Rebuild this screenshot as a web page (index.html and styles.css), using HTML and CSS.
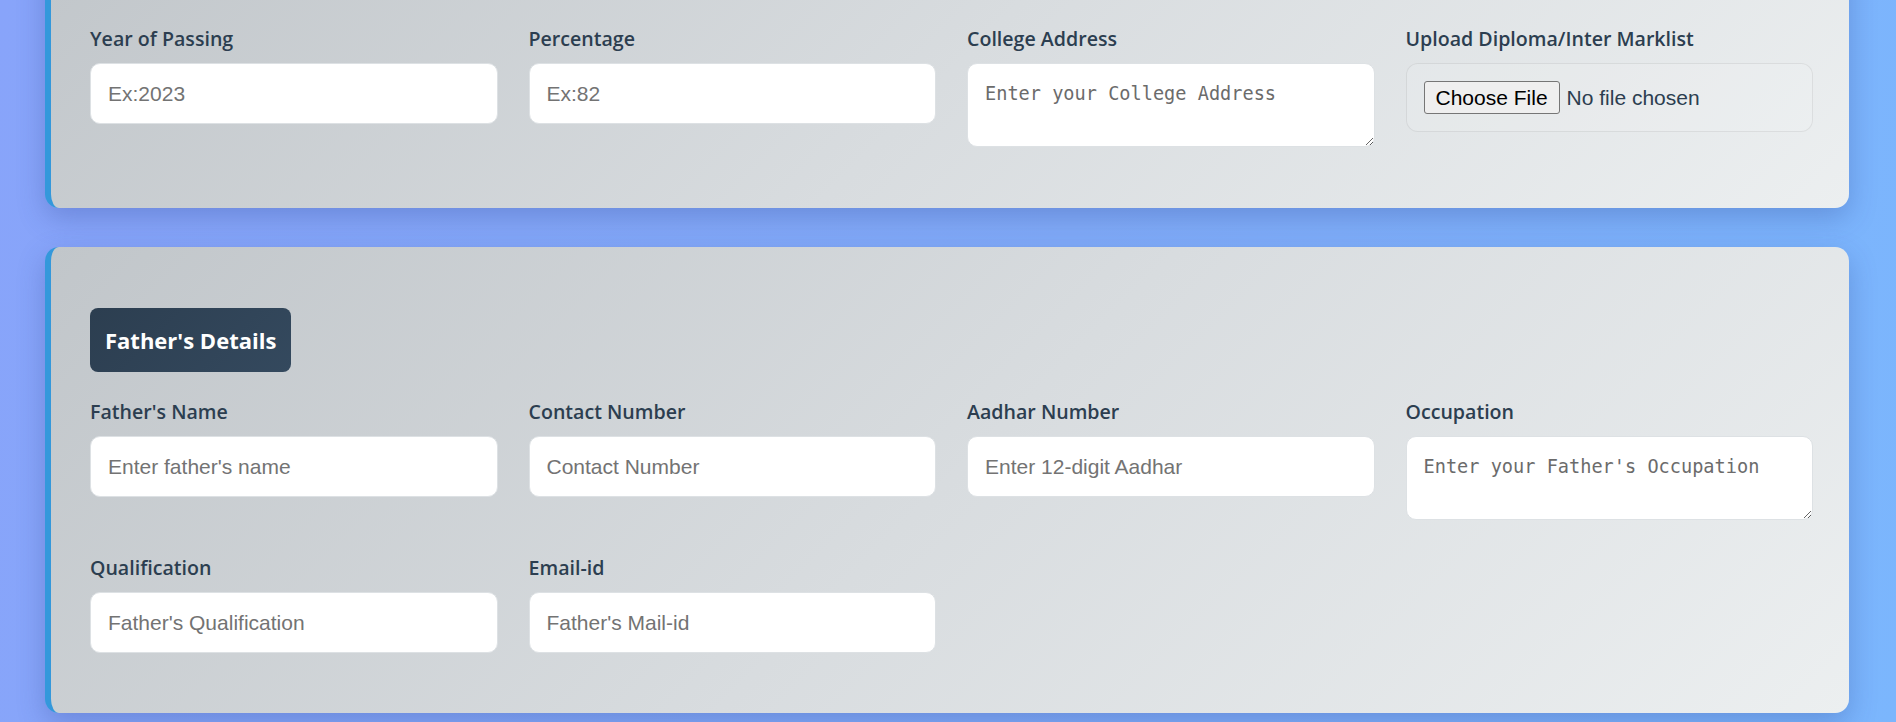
FILE: index.html
```html
<!DOCTYPE html>
<html lang="en">
<head>
<meta charset="utf-8">
<title>Admission Form</title>
<link rel="stylesheet" href="styles.css">
</head>
<body>
<div class="page">
  <section class="card card-edu">
    <div class="grid">
      <div class="field">
        <label class="label">Year of Passing</label>
        <input class="input" type="text" placeholder="Ex:2023">
      </div>
      <div class="field">
        <label class="label">Percentage</label>
        <input class="input" type="text" placeholder="Ex:82">
      </div>
      <div class="field">
        <label class="label">College Address</label>
        <textarea class="textarea" placeholder="Enter your College Address"></textarea>
      </div>
      <div class="field">
        <label class="label">Upload Diploma/Inter Marklist</label>
        <input class="file" type="file">
      </div>
    </div>
  </section>

  <section class="card">
    <h3 class="badge">Father's Details</h3>
    <div class="grid">
      <div class="field">
        <label class="label">Father's Name</label>
        <input class="input" type="text" placeholder="Enter father's name">
      </div>
      <div class="field">
        <label class="label">Contact Number</label>
        <input class="input" type="text" placeholder="Contact Number">
      </div>
      <div class="field">
        <label class="label">Aadhar Number</label>
        <input class="input" type="text" placeholder="Enter 12-digit Aadhar">
      </div>
      <div class="field">
        <label class="label">Occupation</label>
        <textarea class="textarea" placeholder="Enter your Father's Occupation"></textarea>
      </div>
      <div class="field">
        <label class="label">Qualification</label>
        <input class="input" type="text" placeholder="Father's Qualification">
      </div>
      <div class="field">
        <label class="label">Email-id</label>
        <input class="input" type="email" placeholder="Father's Mail-id">
      </div>
    </div>
  </section>
</div>
</body>
</html>
```

FILE: styles.css
```css
* {
  box-sizing: border-box;
}

html, body {
  margin: 0;
  height: 722px;
  overflow: hidden;
}

body {
  background: linear-gradient(100deg, #88a4fa 0%, #82acf9 55%, #7bb6fd 100%);
  font-family: "Open Sans", "Noto Sans", "Liberation Sans", sans-serif;
  color: #2c3e50;
}

.page {
  padding: 0 47px 0 45px;
}

.card {
  background: linear-gradient(135deg, #c1c6ca 0%, #d8dcdf 50%, #eceff0 100%);
  border-left: 6px solid #3498db;
  border-radius: 14px;
  padding: 40px 36px 60px 39px;
  box-shadow: 0 10px 28px rgba(40, 60, 140, 0.28);
}

.card-edu {
  margin-top: -60px;
  padding-top: 86px;
  padding-bottom: 61px;
}

.card + .card {
  margin-top: 39px;
}

.grid {
  display: grid;
  grid-template-columns: repeat(4, 1fr);
  column-gap: 31px;
  row-gap: 35px;
  align-items: start;
}

.field {
  display: flex;
  flex-direction: column;
}

.label {
  display: block;
  font-size: 19.6px;
  line-height: 25px;
  font-weight: 600;
  color: #2c3e50;
  margin-bottom: 12px;
}

.input,
.textarea,
.file {
  width: 100%;
  border: 1px solid #dde1e4;
  border-radius: 10px;
  color: #2c3e50;
}

.input {
  height: 61px;
  padding: 0 17px;
  background: #ffffff;
  font-family: "Liberation Sans", Arial, sans-serif;
  font-size: 21px;
}

.textarea {
  height: 84px;
  padding: 18px 17px 16px;
  background: #ffffff;
  font-family: "DejaVu Sans Mono", "Liberation Mono", monospace;
  font-size: 18.6px;
  line-height: 24px;
}

.input::placeholder {
  color: #737373;
}

.textarea::placeholder {
  color: #6b6b6b;
}

.file {
  height: 69px;
  padding: 17px 17px;
  background: rgba(255, 255, 255, 0.12);
  border-color: rgba(0, 0, 0, 0.07);
  border-radius: 12px;
  font-family: "Liberation Sans", Arial, sans-serif;
  font-size: 21px;
}

.file::file-selector-button {
  font-family: "Liberation Sans", Arial, sans-serif;
  font-size: 21px;
  height: 33px;
  padding: 0 11px;
  margin-right: 7px;
  color: #000000;
  background: #efefef;
  border: 1px solid #767676;
  border-radius: 3px;
}

.badge {
  display: inline-block;
  margin: 21px 0 27px;
  padding: 16px 15px;
  background: linear-gradient(135deg, #2c3e50, #34495e);
  color: #ffffff;
  border-radius: 8px;
  font-size: 22px;
  line-height: 32px;
  font-weight: 700;
}
```
